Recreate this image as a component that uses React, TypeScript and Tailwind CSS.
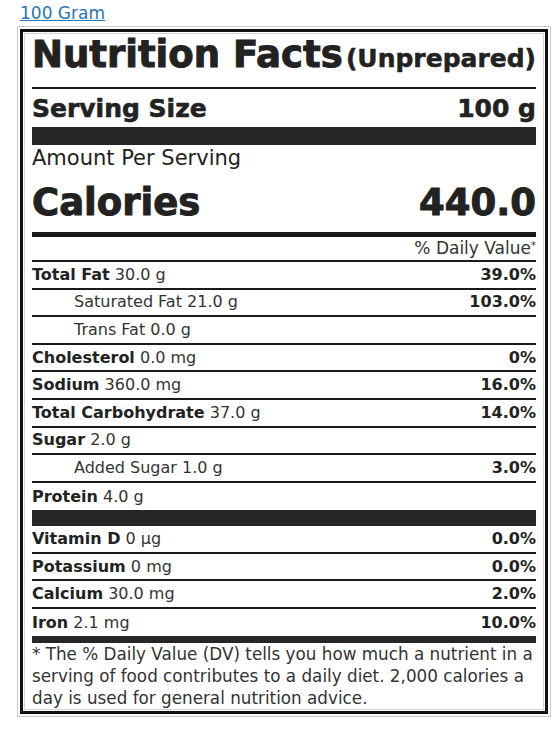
import React from "react";

type Row = {
  label: string;
  amount: string;
  dv?: string;
  indent?: boolean;
  last?: boolean;
};

const macros: Row[] = [
  { label: "Total Fat", amount: "30.0 g", dv: "39.0%" },
  { label: "Saturated Fat", amount: "21.0 g", dv: "103.0%", indent: true },
  { label: "Trans Fat", amount: "0.0 g", indent: true },
  { label: "Cholesterol", amount: "0.0 mg", dv: "0%" },
  { label: "Sodium", amount: "360.0 mg", dv: "16.0%" },
  { label: "Total Carbohydrate", amount: "37.0 g", dv: "14.0%" },
  { label: "Sugar", amount: "2.0 g" },
  { label: "Added Sugar", amount: "1.0 g", dv: "3.0%", indent: true },
  { label: "Protein", amount: "4.0 g", last: true },
];

const minerals: Row[] = [
  { label: "Vitamin D", amount: "0 µg", dv: "0.0%" },
  { label: "Potassium", amount: "0 mg", dv: "0.0%" },
  { label: "Calcium", amount: "30.0 mg", dv: "2.0%" },
  { label: "Iron", amount: "2.1 mg", dv: "10.0%", last: true },
];

const NutrientRow = ({ row, h }: { row: Row; h: string }) => (
  <div
    className={`flex items-center justify-between text-[16px] leading-[16px] ${h} ${
      row.last ? "" : "border-b-2 border-[#1a1a1a]"
    }`}
  >
    <div className={row.indent ? "pl-[42px] text-[#333]" : ""}>
      {row.indent ? (
        <span>{row.label}</span>
      ) : (
        <span className="font-bold">{row.label}</span>
      )}{" "}
      <span className="text-[#333]">{row.amount}</span>
    </div>
    {row.dv && <div className="font-bold">{row.dv}</div>}
  </div>
);

export default function App() {
  return (
    <main
      className="min-h-screen bg-white text-[#222]"
      style={{ fontFamily: '"DejaVu Sans", "Liberation Sans", sans-serif' }}
    >
      {/* serving link */}
      <div className="pl-[20px] pt-[5px] h-[26px] text-[17px] leading-[17px]">
        <a href="#" className="text-[#2775b6] underline">
          100 Gram
        </a>
      </div>

      {/* label box: gray / black / gray frame */}
      <div className="ml-[17px] w-[534px] border border-[#c8c8c8] p-[2px]">
        <div className="border-[3px] border-[#111] p-px">
          <div className="border border-[#d4d4d4] pl-[7px] pr-[7px]">
            {/* title */}
            <div className="flex items-baseline justify-between whitespace-nowrap h-[55px] pt-[2px] border-b-2 border-[#1a1a1a]">
              <span className="font-bold text-[37px] leading-[37px] [-webkit-text-stroke:1px_#222]">
                Nutrition Facts
              </span>
              <span className="font-bold text-[25px] leading-[37px] [-webkit-text-stroke:0.5px_#222]">
                (Unprepared)
              </span>
            </div>

            {/* serving size */}
            <div className="flex justify-between h-[38px] pt-[7px] font-bold text-[25px] leading-[25px] [-webkit-text-stroke:0.6px_#222]">
              <span>Serving Size</span>
              <span>100 g</span>
            </div>
            <div className="h-[18px] bg-[#262626]" />

            {/* calories */}
            <div className="h-[92px] border-b-[5px] border-[#1a1a1a]">
              <div className="pt-[3px] text-[21px] leading-[21px]">Amount Per Serving</div>
              <div className="flex justify-between mt-[15px] font-bold text-[37px] leading-[37px] [-webkit-text-stroke:1px_#222]">
                <span>Calories</span>
                <span>440.0</span>
              </div>
            </div>

            <div className="h-[25px] pt-[3px] text-right text-[17px] leading-[16px] text-[#333] border-b-2 border-[#1a1a1a]">
              % Daily Value<sup className="text-[10px]">*</sup>
            </div>

            {macros.map((r) => (
              <NutrientRow key={r.label} row={r} h="h-[27.6px]" />
            ))}

            <div className="h-[16px] bg-[#262626]" />

            {minerals.map((r) => (
              <NutrientRow key={r.label} row={r} h="h-[27.5px]" />
            ))}

            <div className="h-[7px] bg-[#262626]" />

            {/* footnote */}
            <p className="text-[16.8px] leading-[22px] text-[#333] whitespace-nowrap">
              * The % Daily Value (DV) tells you how much a nutrient in a
              <br />
              serving of food contributes to a daily diet. 2,000 calories a
              <br />
              day is used for general nutrition advice.
            </p>
          </div>
        </div>
      </div>
    </main>
  );
}
